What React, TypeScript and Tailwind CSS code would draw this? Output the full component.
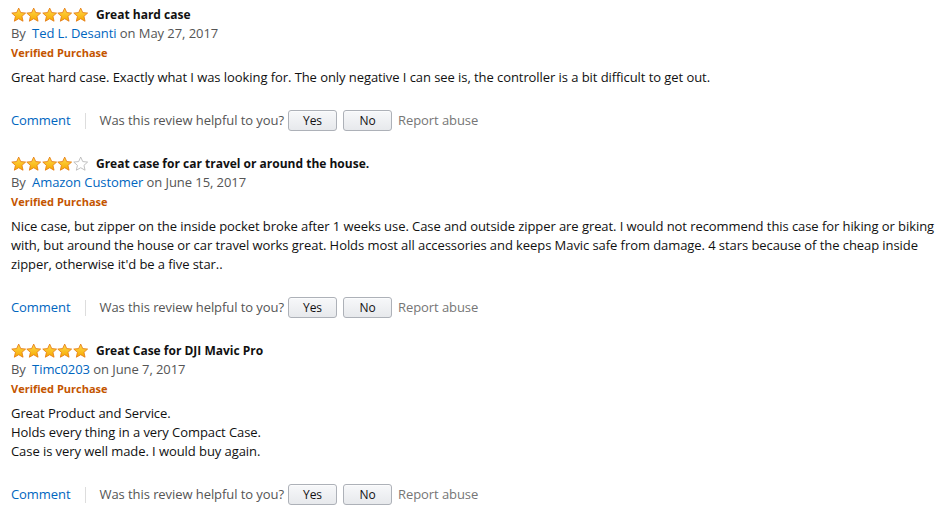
import React from "react";

type Review = {
  rating: number;
  title: string;
  author: string;
  date: string;
  body: string[];
};

const reviews: Review[] = [
  {
    rating: 5,
    title: "Great hard case",
    author: "Ted L. Desanti",
    date: "May 27, 2017",
    body: [
      "Great hard case. Exactly what I was looking for. The only negative I can see is, the controller is a bit difficult to get out.",
    ],
  },
  {
    rating: 4,
    title: "Great case for car travel or around the house.",
    author: "Amazon Customer",
    date: "June 15, 2017",
    body: [
      "Nice case, but zipper on the inside pocket broke after 1 weeks use. Case and outside zipper are great. I would not recommend this case for hiking or biking with, but around the house or car travel works great. Holds most all accessories and keeps Mavic safe from damage. 4 stars because of the cheap inside zipper, otherwise it'd be a five star..",
    ],
  },
  {
    rating: 5,
    title: "Great Case for DJI Mavic Pro",
    author: "Timc0203",
    date: "June 7, 2017",
    body: [
      "Great Product and Service.",
      "Holds every thing in a very Compact Case.",
      "Case is very well made. I would buy again.",
    ],
  },
];

function Star({ filled }: { filled: boolean }) {
  return (
    <svg width="15.4" height="16" viewBox="0 0 24 24" className="block">
      <defs>
        <linearGradient id="starfill" x1="0" y1="0" x2="0" y2="1">
          <stop offset="0" stopColor="#ffdb4d" />
          <stop offset="1" stopColor="#f6a800" />
        </linearGradient>
      </defs>
      <path
        d="M12 1.2l3.2 7 7.6.8-5.7 5.1 1.7 7.6L12 17.8l-6.8 3.9 1.7-7.6L1.2 9l7.6-.8z"
        fill={filled ? "url(#starfill)" : "#fff"}
        stroke={filled ? "#e47911" : "#b5b5b5"}
        strokeWidth="1.3"
        strokeLinejoin="round"
      />
    </svg>
  );
}

function VoteButton({ label }: { label: string }) {
  return (
    <button className="w-[49px] h-[21px] rounded-[3px] border border-[#adb1b8] bg-gradient-to-b from-[#f7f8fa] to-[#e7e9ec] text-[12px] text-[#111] leading-none shadow-[0_1px_0_rgba(255,255,255,0.6)_inset]">
      {label}
    </button>
  );
}

export default function App() {
  return (
    <div className="w-[946px] h-[519px] bg-white font-['Open_Sans',sans-serif] text-[13px] leading-[19px] tracking-[-0.07px] text-[#111] px-[11px] pt-[5px]">
      {reviews.map((r, i) => (
        <div key={i} className="mb-[24px]">
          {/* Stars + title */}
          <div className="flex items-center h-[19px]">
            <div className="flex mr-[8px]">
              {[0, 1, 2, 3, 4].map((s) => (
                <Star key={s} filled={s < r.rating} />
              ))}
            </div>
            <span className="font-bold text-[12px] tracking-normal">{r.title}</span>
          </div>
          <div className="text-[#555]">
            By <span className="text-[#0066c0] ml-[3px]">{r.author}</span> on {r.date}
          </div>
          <div className="text-[#c45500] font-bold text-[11px] tracking-normal">
            Verified Purchase
          </div>
          <div className="mt-[6px] w-[925px]">
            {r.body.map((line, j) => (
              <div key={j}>{line}</div>
            ))}
          </div>
          {/* Actions */}
          <div className="flex items-center mt-[24px] h-[19px]">
            <span className="text-[#0066c0]">Comment</span>
            <span className="w-px h-[16px] bg-[#ddd] mx-[14px]" />
            <span className="text-[#555] mr-[4px]">Was this review helpful to you?</span>
            <VoteButton label="Yes" />
            <span className="w-[6px]" />
            <VoteButton label="No" />
            <span className="text-[#767676] ml-[6px]">Report abuse</span>
          </div>
        </div>
      ))}
    </div>
  );
}
